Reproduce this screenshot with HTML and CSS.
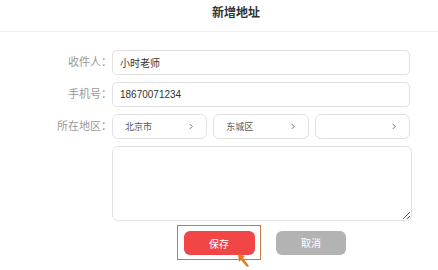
FILE: index.html
```html
<!DOCTYPE html>
<html lang="zh-CN">
<head>
    <meta charset="UTF-8">
    <title>新增地址</title>
    <link rel="stylesheet" href="styles.css">
</head>
<body>
<div class="header">
    <h1 class="title">新增地址</h1>
</div>

<div class="form">
    <div class="row">
        <label class="label">收件人：</label>
        <input class="field" type="text" value="小时老师">
    </div>
    <div class="row">
        <label class="label">手机号：</label>
        <input class="field" type="text" value="18670071234">
    </div>
    <div class="row">
        <label class="label">所在地区：</label>
        <div class="region">
            <div class="pick"><span>北京市</span><svg class="chev" viewBox="0 0 5 8"><polyline points="1,1 4,4 1,7"/></svg></div>
            <div class="pick"><span>东城区</span><svg class="chev" viewBox="0 0 5 8"><polyline points="1,1 4,4 1,7"/></svg></div>
            <div class="pick"><span></span><svg class="chev" viewBox="0 0 5 8"><polyline points="1,1 4,4 1,7"/></svg></div>
        </div>
    </div>
    <div class="row">
        <span class="label"></span>
        <textarea class="detail"></textarea>
    </div>
    <div class="actions">
        <!-- highlight box around the save button -->
        <span class="focus"><button class="btn save">保存</button></span>
        <button class="btn cancel">取消</button>
    </div>
</div>

<!-- mouse pointer from the screenshot -->
<svg class="cursor" viewBox="0 0 16 18">
    <polygon points="2,2 9,4 7,6 13,14 11,15 5,8 3,10" fill="#e8771f"/>
</svg>
</body>
</html>
```

FILE: styles.css
```css
body {
    margin: 0;
    font-family: "Liberation Sans", "Noto Sans CJK SC", sans-serif;
    background-color: #fff;
}

.header {
    height: 31px;
    border-bottom: 1px solid #f0f0f0;
    padding-left: 34px;
    text-align: center;
}

.title {
    margin: 0;
    font-size: 12px;
    line-height: 27px;
    font-weight: bold;
    color: #333;
}

.form {
    padding-top: 18px;
}

.row {
    display: flex;
    align-items: flex-start;
    margin-bottom: 7px;
}

.label {
    width: 112px;
    flex-shrink: 0;
    text-align: right;
    font-size: 11px;
    line-height: 25px;
    color: #999;
}

.field {
    width: 298px;
    height: 25px;
    box-sizing: border-box;
    border: 1px solid #e2e2e2;
    border-radius: 5px;
    padding: 0 7px;
    font-family: inherit;
    font-size: 10px;
    color: #333;
    outline: none;
}

.region {
    width: 298px;
    display: grid;
    grid-template-columns: 1fr 1fr 1fr;
    gap: 6px;
}

.pick {
    height: 25px;
    box-sizing: border-box;
    border: 1px solid #e2e2e2;
    border-radius: 6px;
    padding: 0 13px 0 12px;
    display: flex;
    align-items: center;
    justify-content: space-between;
    font-size: 9px;
    color: #555;
}

.chev {
    width: 4px;
    height: 7px;
    fill: none;
    stroke: #666;
    stroke-width: 1.2;
}

.detail {
    width: 300px;
    height: 75px;
    box-sizing: border-box;
    border: 1px solid #e2e2e2;
    border-radius: 6px;
    margin: 0;
    display: block;
    outline: none;
}

.actions {
    display: flex;
    align-items: center;
    gap: 15px;
    padding-left: 177px;
    margin-top: -3px;
}

.focus {
    display: block;
    padding: 5px 5.5px 4px;
    border: 1.5px solid #d0773f;
}

.btn {
    display: block;
    width: 71px;
    height: 24px;
    border: none;
    border-radius: 6px;
    color: #fff;
    font-family: inherit;
    font-size: 10px;
    cursor: pointer;
}

.save {
    background-color: #f24545;
}

.cancel {
    width: 70px;
    background-color: #b3b3b3;
}

.cursor {
    position: absolute;
    left: 236px;
    top: 252px;
    width: 16px;
    height: 18px;
}
```
